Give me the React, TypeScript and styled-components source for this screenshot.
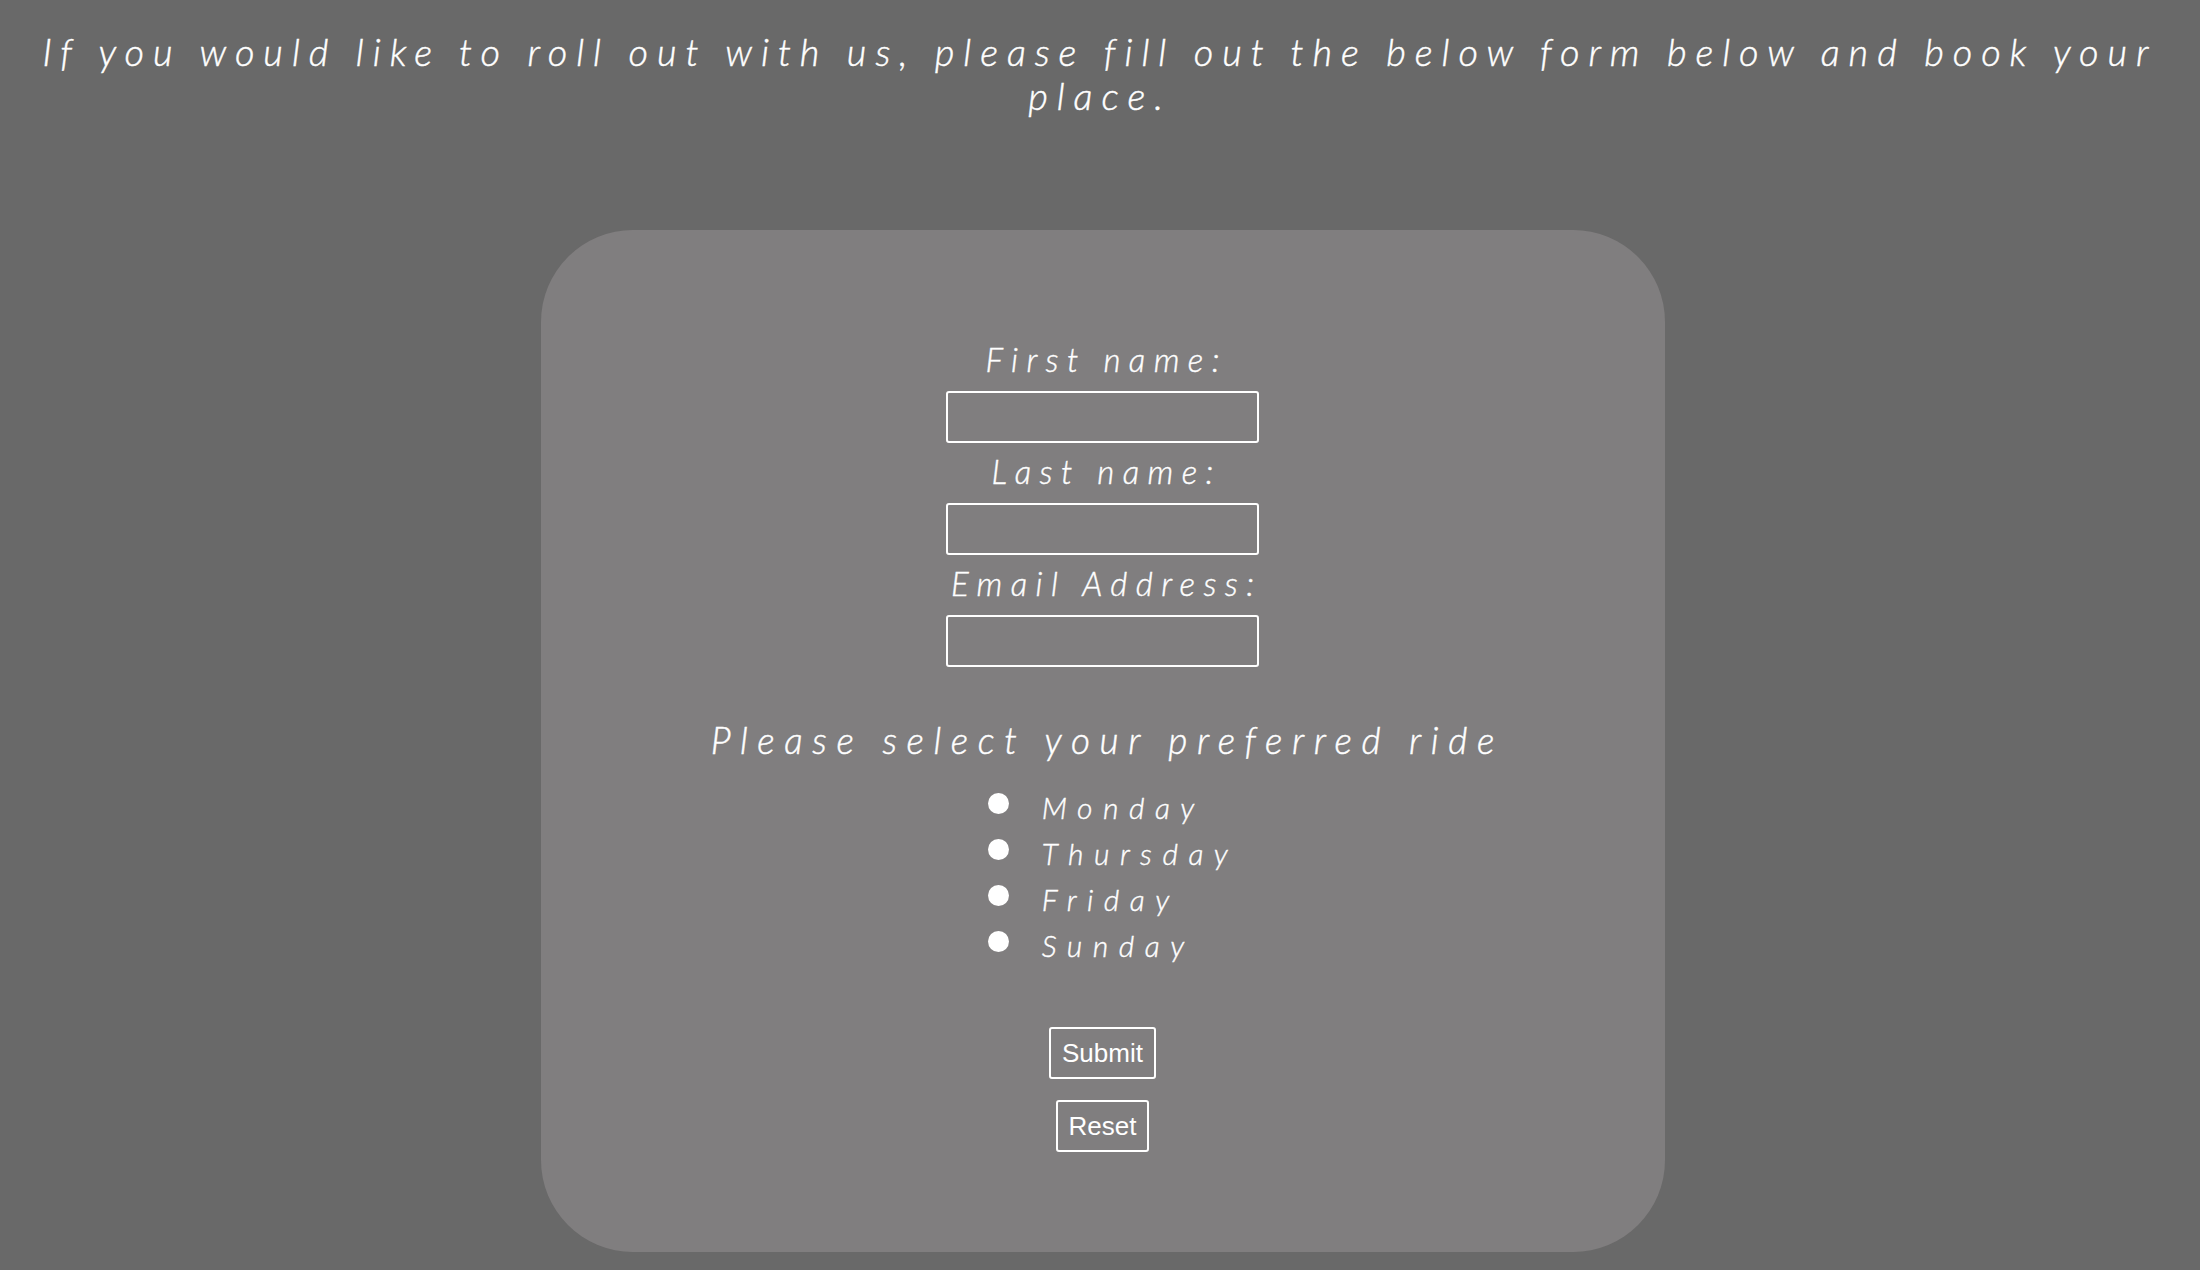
import React from "react";
import styled, { createGlobalStyle } from "styled-components";

const Global = createGlobalStyle`
  html, body { margin: 0; padding: 0; background: #696969; }
  body { font-family: Lato, "Open Sans", sans-serif; }
  * { box-sizing: border-box; }
`;

const Page = styled.div`
  display: flex;
  flex-direction: column;
  align-items: center;
  padding: 29px 8px 18px;
`;

const Intro = styled.h1`
  margin: 0;
  width: 100%;
  text-align: center;
  font-family: Lato, sans-serif;
  font-style: italic;
  font-weight: 300;
  -webkit-text-stroke: 0.45px #ffffff;
  font-size: 38px;
  line-height: 44px;
  letter-spacing: 0.235em;
  color: #ffffff;
`;

const Card = styled.form`
  margin-top: 113px;
  margin-left: 5px;
  width: 1124px;
  height: 1022px;
  border-radius: 92px;
  background: #807e7f;
  display: flex;
  flex-direction: column;
  align-items: center;
  padding-top: 109px;
`;

const Field = styled.div`
  display: flex;
  flex-direction: column;
  align-items: center;
  margin-bottom: 8px;
`;

const Label = styled.label`
  font-family: Lato, sans-serif;
  font-style: italic;
  font-weight: 300;
  -webkit-text-stroke: 0.4px #ffffff;
  font-size: 33px;
  line-height: 40px;
  letter-spacing: 0.255em;
  color: #ffffff;
  margin-bottom: 12px;
  padding-left: 0.255em;
`;

const TextInput = styled.input`
  width: 313px;
  height: 52px;
  border: 2px solid #ffffff;
  border-radius: 3px;
  background: transparent;
  color: #ffffff;
  font-size: 20px;
  padding: 0 8px;
  outline: none;
`;

const RideTitle = styled.h2`
  margin: 43px 0 0;
  font-family: Lato, sans-serif;
  font-style: italic;
  font-weight: 300;
  -webkit-text-stroke: 0.45px #ffffff;
  font-size: 37px;
  line-height: 44px;
  letter-spacing: 0.26em;
  color: #ffffff;
  padding-left: 0.26em;
`;

const RadioGroup = styled.div`
  margin-top: 22px;
  display: flex;
  flex-direction: column;
  align-items: flex-start;
  padding-left: 21px;
`;

const RadioRow = styled.label`
  display: flex;
  align-items: center;
  height: 46px;
  gap: 33px;
  font-family: Lato, sans-serif;
  font-style: italic;
  font-weight: 300;
  -webkit-text-stroke: 0.4px #ffffff;
  font-size: 30px;
  letter-spacing: 0.35em;
  color: #ffffff;
`;

const Radio = styled.input`
  appearance: none;
  -webkit-appearance: none;
  margin: 0;
  width: 21px;
  height: 21px;
  border-radius: 50%;
  background: #ffffff;
  border: none;
  position: relative;
  top: -4px;
`;

const Buttons = styled.div`
  margin-top: 59px;
  display: flex;
  flex-direction: column;
  align-items: center;
  gap: 21px;
`;

const Button = styled.button`
  font-family: "Liberation Sans", Arial, sans-serif;
  font-size: 26px;
  line-height: 30px;
  color: #ffffff;
  background: transparent;
  border: 2px solid #ffffff;
  border-radius: 3px;
  padding: 9px 11px;
  cursor: pointer;
`;

const days = ["Monday", "Thursday", "Friday", "Sunday"];

export default function App() {
  return (
    <>
      <Global />
      <Page>
        <Intro>
          If you would like to roll out with us, please fill out the below form below and book your place.
        </Intro>
        <Card onSubmit={(e) => e.preventDefault()}>
          <Field>
            <Label htmlFor="fname">First name:</Label>
            <TextInput id="fname" type="text" />
          </Field>
          <Field>
            <Label htmlFor="lname">Last name:</Label>
            <TextInput id="lname" type="text" />
          </Field>
          <Field>
            <Label htmlFor="email">Email Address:</Label>
            <TextInput id="email" type="email" />
          </Field>
          <RideTitle>Please select your preferred ride</RideTitle>
          <RadioGroup>
            {days.map((d) => (
              <RadioRow key={d}>
                <Radio type="radio" name="ride" value={d} />
                {d}
              </RadioRow>
            ))}
          </RadioGroup>
          <Buttons>
            <Button type="submit">Submit</Button>
            <Button type="reset">Reset</Button>
          </Buttons>
        </Card>
      </Page>
    </>
  );
}
